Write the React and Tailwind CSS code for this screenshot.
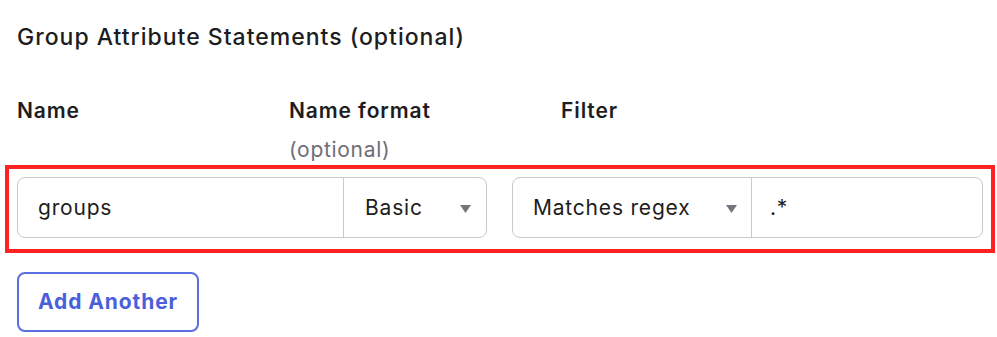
export default function App() {
  return (
    <div className="min-h-screen bg-white text-[#1d1d21] font-['Inter','Liberation_Sans',sans-serif]">
      <div className="pt-[22px]">
        <h2 className="pl-[17px] text-[23px] leading-[30px] font-medium tracking-[1px]">
          Group Attribute Statements (optional)
        </h2>

        <div className="mt-[46px] flex pl-[17px] text-[21px] leading-[26px] font-semibold tracking-[0.9px]">
          <div className="w-[272px]">Name</div>
          <div className="w-[272px]">
            Name format
            <div className="mt-[13px] font-normal tracking-[0.7px] text-[#6e6e78]">(optional)</div>
          </div>
          <div>Filter</div>
        </div>

        <div className="mt-[2px] mx-[5px] w-[990px] border-4 border-[#ff2222] pt-[8px] pb-[11px] px-[8px]">
          <div className="flex gap-[25px] text-[21px] tracking-[0.8px]">
            <div className="flex h-[61px] w-[470px] rounded-[8px] border border-[#c9c9cf]">
              <div className="flex w-[326px] items-center border-r border-[#c9c9cf] px-[20px]">groups</div>
              <div className="flex flex-1 items-center justify-between pl-[21px] pr-[15px]">
                <span>Basic</span>
                <Caret />
              </div>
            </div>
            <div className="flex h-[61px] w-[471px] rounded-[8px] border border-[#c9c9cf]">
              <div className="flex w-[239px] items-center justify-between border-r border-[#c9c9cf] pl-[20px] pr-[14px]">
                <span>Matches regex</span>
                <Caret />
              </div>
              <div className="flex flex-1 items-center px-[18px]">.*</div>
            </div>
          </div>
        </div>

        <button className="mt-[19px] ml-[17px] h-[60px] w-[182px] rounded-[8px] border-2 border-[#5b6fe0] text-[21px] font-bold tracking-[0.9px] text-[#4a5fdb]">
          Add Another
        </button>
      </div>
    </div>
  );
}

function Caret() {
  return (
    <svg width="11" height="8" viewBox="0 0 11 8" className="mt-[2px]">
      <path d="M0 0 L11 0 L5.5 8 Z" fill="#76767e" />
    </svg>
  );
}
